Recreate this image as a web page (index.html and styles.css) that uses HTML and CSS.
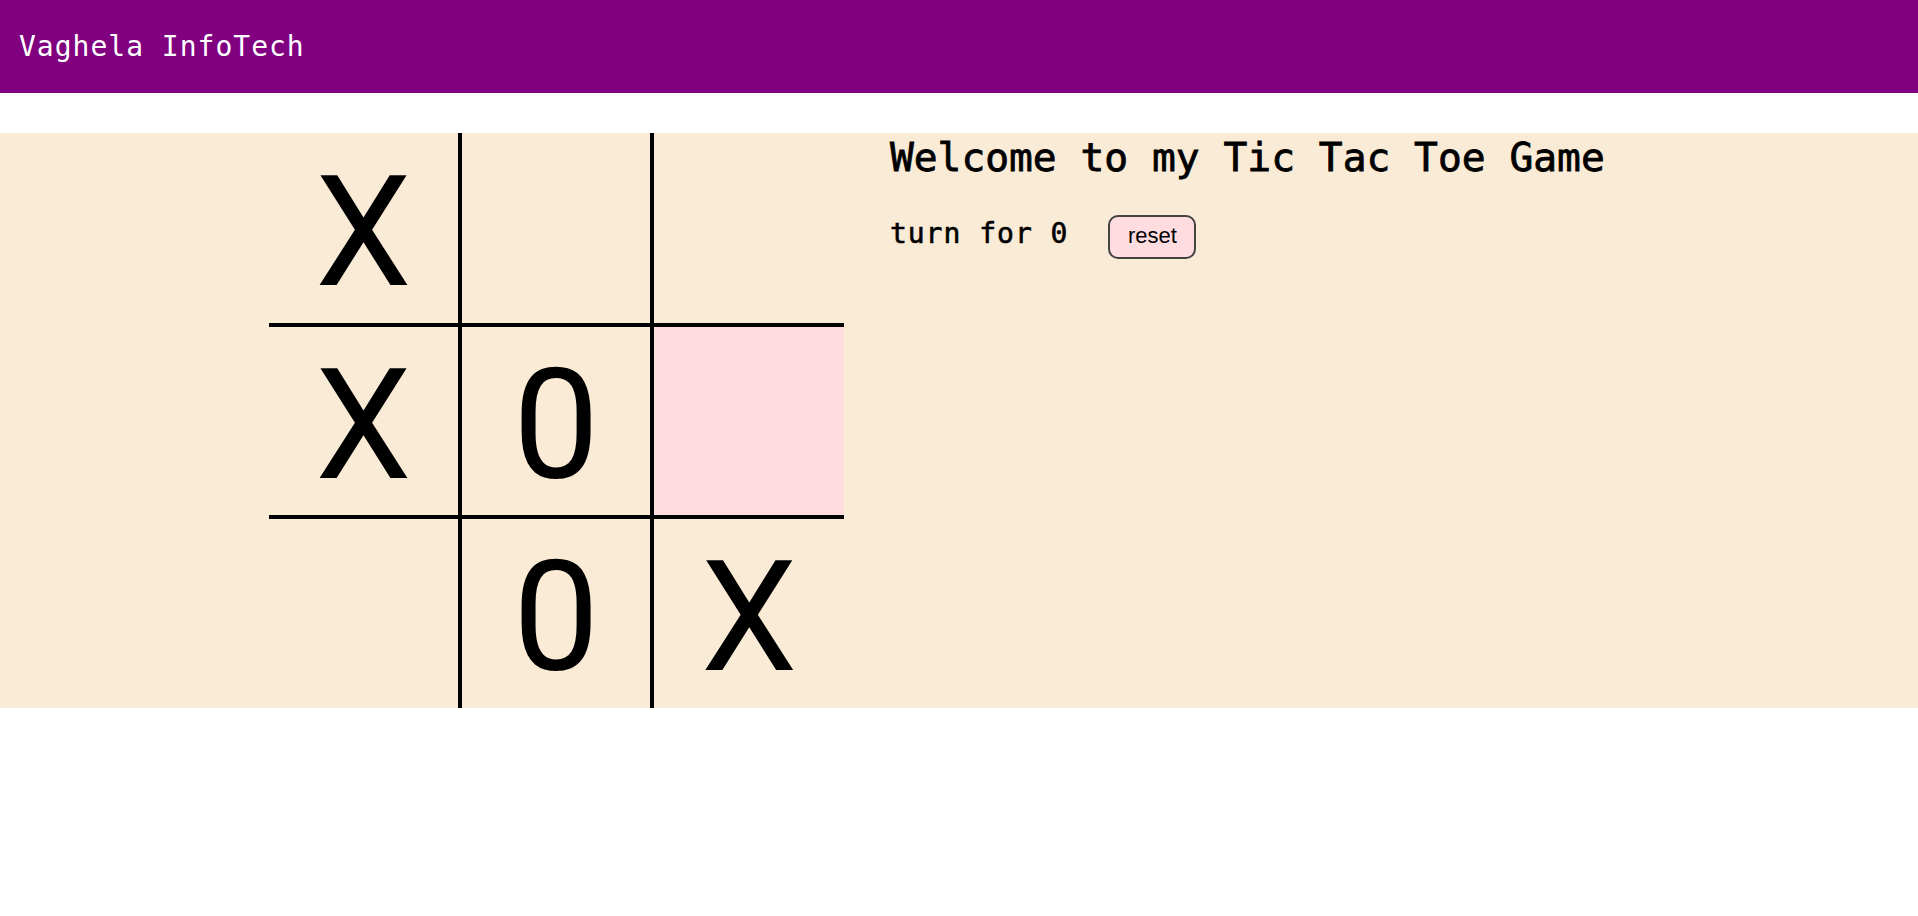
FILE: index.html
```html
<!DOCTYPE html>
<html lang="en">
<head>
<meta charset="utf-8">
<title>Tic Tac Toe</title>
<link rel="stylesheet" href="styles.css">
</head>
<body>
  <nav class="navbar">Vaghela InfoTech</nav>
  <main class="game">
    <div class="board">
      <div class="cell">X</div>
      <div class="cell"></div>
      <div class="cell"></div>
      <div class="cell">X</div>
      <div class="cell">0</div>
      <div class="cell cell-active"></div>
      <div class="cell"></div>
      <div class="cell">0</div>
      <div class="cell">X</div>
    </div>
    <div class="info">
      <h1 class="title">Welcome to my Tic Tac Toe Game</h1>
      <div class="turn-row">
        <span class="turn">turn for 0</span>
        <button class="reset">reset</button>
      </div>
    </div>
  </main>
</body>
</html>
```

FILE: styles.css
```css
body {
  margin: 0;
  font-family: "DejaVu Sans Mono", "Liberation Mono", monospace;
  background: #ffffff;
}

.navbar {
  box-sizing: border-box;
  height: 93px;
  padding: 30px 0 0 19px;
  background: #800080;
  color: #ffffff;
  font-size: 28px;
  line-height: 34px;
  letter-spacing: 1px;
}

.game {
  margin-top: 40px;
  display: flex;
  align-items: flex-start;
  padding-left: 14vw;
  background: #faebd7;
}

.board {
  display: grid;
  grid-template-columns: repeat(3, 10vw);
  grid-template-rows: repeat(3, 10vw);
}

.cell {
  box-sizing: border-box;
  display: flex;
  align-items: center;
  justify-content: center;
  padding-top: 9px;
  border: 2px solid #000000;
  font-family: Roboto, "Liberation Sans", sans-serif;
  font-size: 8vw;
  color: #000000;
}

.cell:nth-child(-n+3) { border-top: 0; }
.cell:nth-child(n+7) { border-bottom: 0; }
.cell:nth-child(3n+1) { border-left: 0; }
.cell:nth-child(3n) { border-right: 0; }

.cell-active {
  background: #ffdce0;
}

.info {
  margin-left: 46px;
}

.title {
  margin: 0;
  font-size: 39.6px;
  line-height: 48px;
  font-weight: normal;
  -webkit-text-stroke: 0.8px #000000;
  color: #000000;
}

.turn-row {
  display: flex;
  align-items: baseline;
  margin-top: 34px;
}

.turn {
  font-size: 28px;
  font-weight: normal;
  -webkit-text-stroke: 0.6px #000000;
  letter-spacing: 1px;
  color: #000000;
}

.reset {
  margin-left: 40px;
  padding: 6px 17.5px 8px;
  border: 2px solid #444444;
  border-radius: 10px;
  background: #ffdce0;
  color: #000000;
  font-family: "Liberation Sans", Arial, sans-serif;
  font-size: 22px;
}
```
